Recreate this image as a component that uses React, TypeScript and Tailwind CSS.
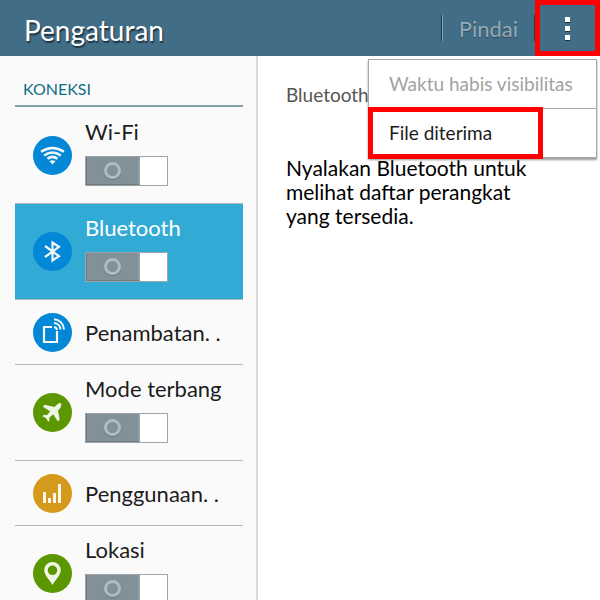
import { ReactNode, useState } from 'react'

type Item = {
    title: string
    color: string
    icon: ReactNode
    toggle?: boolean
}

function WifiIcon() {
    return <g fill="none" stroke="#f4f8fb" strokeWidth="2.5">
        <path d="M8 15.8Q19.5 8.2 31 15.8" />
        <path d="M11.2 19.4Q19.5 13.600 27.800 19.400" />
        <path d="M14.500 22.800Q19.500 19 24.500 22.800" />
        <path d="M16.500 25.300L19.500 28.500L22.500 25.300Q19.500 23.300 16.500 25.300Z" fill="#f4f8fb" stroke="none" />
    </g>
}

function BluetoothIcon() {
    return <path d="M12 14L26 24.200L19.500 28.500V10.500L26 14.800L12 25"
        fill="none" stroke="#f4f8fb" strokeWidth="2.200" />
}

function TetherIcon() {
    return <g fill="none" stroke="#f4f8fb" strokeWidth="2.200">
        <path d="M19 14H11V29H24V18" />
        <path d="M21 14A3.500 3.500 0 0 1 24 17M21 10A7 7 0 0 1 27.500 16.500M21 6.200A10.500 10.500 0 0 1 31 16.500" strokeWidth="2" />
    </g>
}

function PlaneIcon() {
    return <path d="M28 10.200Q26.500 9.800 24.500 11.200L21.500 14L11.500 11.800L10 13.800L17.200 18.500L13.800 22.300L10.800 21.800L9.500 23.300L13.200 25.200L15.200 28.700L16.500 27.500L16.200 24.700L20.200 21.200L24.700 28.200L26.700 26.800L25 17.500L27.500 14.700Q29 12 28 10.200Z"
        fill="#f0f5e8" />
}

function UsageIcon() {
    return <path d="M10 18h3v11h-3zM15 24h3v5h-3zM20 19h3v10h-3zM25 10h3v19h-3z" fill="#fdf8ee" />
}

function PinIcon() {
    return <path d="M19.500 8A8.300 8.300 0 0 0 11.200 16C11.200 21 16 25 19.500 31C23 25 27.800 21 27.800 16A8.300 8.300 0 0 0 19.500 8ZM19.500 11.500A4.800 4.800 0 1 1 19.500 21.100A4.800 4.800 0 1 1 19.500 11.500Z"
        fill="#f0f5e8" fillRule="evenodd" />
}

const items: Item[] = [
    { title: 'Wi-Fi', color: '#0288d6', icon: <WifiIcon />, toggle: true },
    { title: 'Bluetooth', color: '#0288d6', icon: <BluetoothIcon />, toggle: true },
    { title: 'Penambatan. .', color: '#0288d6', icon: <TetherIcon /> },
    { title: 'Mode terbang', color: '#5b9700', icon: <PlaneIcon />, toggle: true },
    { title: 'Penggunaan. .', color: '#d5991c', icon: <UsageIcon /> },
    { title: 'Lokasi', color: '#5b9700', icon: <PinIcon />, toggle: true },
]

function Toggle({ label }: { label: string }) {
    const [on, setOn] = useState(false)
    return <button role="switch" aria-checked={ on } aria-label={ label }
        onClick={ () => setOn(!on) }
        className={ `flex h-[30px] w-[83px] border border-[#a0a4a6] bg-white ${on ? 'flex-row-reverse' : ''}` }>
        <span className="flex h-full w-[54px] items-center justify-center border-b border-l border-r-2 border-b-[#6d7b82] border-l-[#6d7b82] border-r-[#8f9fa7] bg-[#82909a]">
            <span className="size-[17px] rounded-full border-3 border-[#adbbc5] shadow-[0_1px_1px_#65737c]" />
        </span>
    </button>
}

function Row({ item, active, onSelect }: {
    item: Item
    active: boolean
    onSelect: () => void
}) {
    return <li className={ `flex items-center gap-[13px] border-b border-[#b8b8b8] pl-[18px] ${item.toggle ? 'h-24' : 'h-[65px]'} ${active ? 'bg-[#32aad6] text-white' : 'text-[#1c1c1c]'}` }>
        <svg viewBox="0 0 39 39" className="size-[39px] shrink-0">
            <circle cx="19.5" cy="19.5" r="19.5" fill={ item.color } />
            { item.icon }
        </svg>
        <div className={ `flex min-w-0 grow flex-col items-start gap-3 ${item.toggle ? 'pb-1.5' : 'pt-0.5'}` }>
            <button className="whitespace-nowrap text-[22px] leading-6" onClick={ onSelect }>{ item.title }</button>
            { item.toggle && <Toggle label={ item.title } /> }
        </div>
    </li>
}

function Header({ onMenu }: { onMenu: () => void }) {
    return <header className="flex h-14 shrink-0 items-center bg-[#426d87] pl-6">
        <h1 className="grow pt-1 text-[28px] leading-8 text-white [text-shadow:1px_2px_1px_#1f3440]">Pengaturan</h1>
        <div className="h-[26px] w-0.5 border-l border-r border-l-[#233b4a] border-r-[#8ba5b5]" />
        <button disabled className="px-4 pt-0.5 text-[22px] leading-8 text-[#97a9b4] [text-shadow:0_1px_1px_#2b4757]">Pindai</button>
        <div className="h-[26px] w-px bg-[#233b4a]" />
        <button aria-label="Menu" onClick={ onMenu }
            className="flex h-14 w-[65px] flex-col items-center justify-center gap-1 border-5 border-[#ff0000]">
            <span className="size-[5px] bg-white shadow-[0_1px_0_#1f3440]" />
            <span className="size-[5px] bg-white shadow-[0_1px_0_#1f3440]" />
            <span className="size-[5px] bg-white shadow-[0_1px_0_#1f3440]" />
        </button>
    </header>
}

export default () => {
    const [active, setActive] = useState('Bluetooth'),
        [open, setOpen] = useState(true)
    return <div className="relative flex h-screen flex-col overflow-hidden bg-white font-['Lato','Open_Sans',sans-serif]">
        <Header onMenu={ () => setOpen(!open) } />
        <div className="flex min-h-0 grow">
            <nav className="w-[43%] shrink-0 overflow-hidden border-r-2 border-[#d8d8d8] bg-[#fafafa] pl-[15px] pr-[13px]">
                <h2 className="mb-px border-b-2 border-[#84a1ab] px-2 pb-1 pt-[21px] text-base leading-6 text-[#116d88]">KONEKSI</h2>
                <ul>
                {
                    items.map(item => <Row key={ item.title } item={ item }
                        active={ item.title === active }
                        onSelect={ () => setActive(item.title) } />)
                }
                </ul>
            </nav>
            <main className="grow px-7 pt-[27px]">
                <p className="text-[19px] leading-6 text-[#555]">Bluetooth</p>
                <p className="mt-[49px] max-w-[256px] text-[21px] leading-6 text-black">
                    Nyalakan Bluetooth untuk melihat daftar perangkat yang tersedia.
                </p>
            </main>
        </div>
        {
            open && <div className="absolute right-[3px] top-[59px] w-[229px] border border-[#a8a8a8] bg-white shadow-[0_2px_2px_#999]">
                <button disabled className="block h-12 w-full px-5 text-left text-[19px] text-[#a2a2a2]">
                    Waktu habis visibilitas
                </button>
                <button className="relative block h-[49px] w-full border-t border-[#a8a8a8] px-5 text-left text-[19px] text-[#1c1c1c]">
                    File diterima
                    <span className="absolute -left-px -top-[2px] h-[52px] w-[175px] border-5 border-[#ff0000]" />
                </button>
            </div>
        }
    </div>
}
